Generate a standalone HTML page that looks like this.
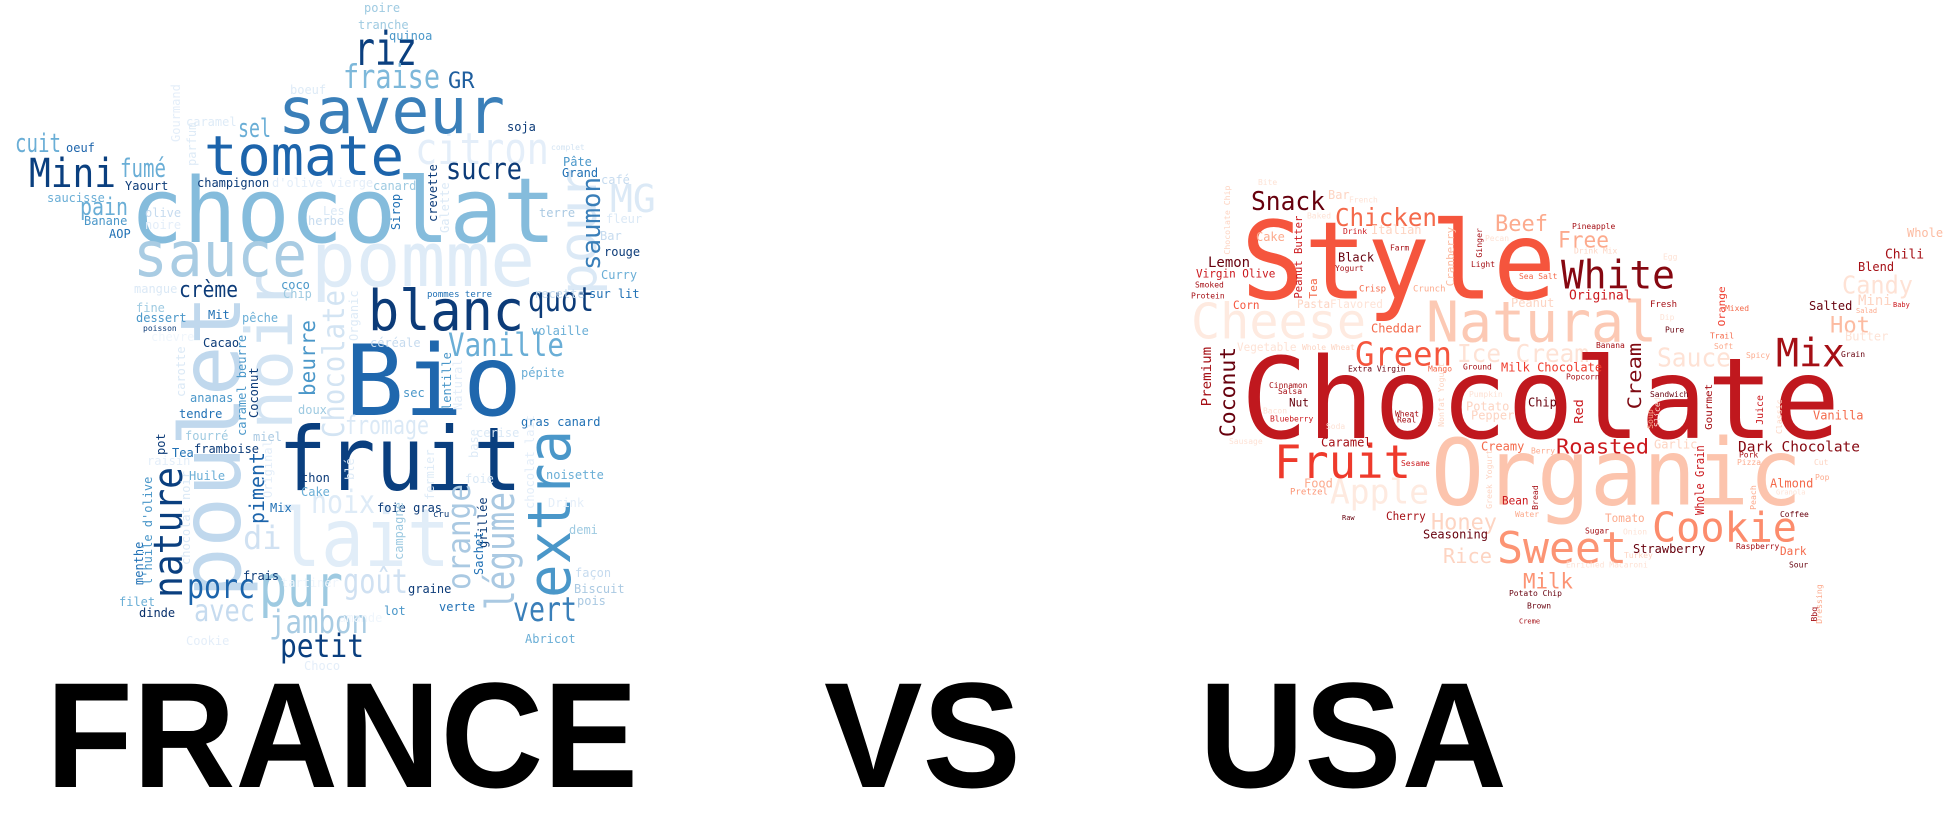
<!DOCTYPE html>
<html><head><meta charset="utf-8"><style>
html,body{margin:0;padding:0;background:#fff;width:1945px;height:828px;overflow:hidden}
svg{display:block}
text{font-family:"DejaVu Sans Mono","Liberation Mono",monospace}
.t{font-family:"Liberation Sans",sans-serif;font-weight:bold}
</style></head><body>
<svg width="1945" height="828" viewBox="0 0 1945 828" xmlns="http://www.w3.org/2000/svg">
<!-- FRANCE cloud -->
<g>
<text x="311" y="286" font-size="76" fill="#deebf7" textLength="224" lengthAdjust="spacingAndGlyphs">pomme</text>
<text x="278" y="566" font-size="80" fill="#e1edf8" textLength="172" lengthAdjust="spacingAndGlyphs">lait</text>
<text x="415" y="164" font-size="44" fill="#e4eef9" textLength="134" lengthAdjust="spacingAndGlyphs">citron</text>
<text transform="translate(240,598) rotate(-90)" font-size="84" fill="#c0d8ed" textLength="303" lengthAdjust="spacingAndGlyphs">poulet</text>
<text transform="translate(292,430) rotate(-90)" font-size="64" fill="#d3e4f3" textLength="160" lengthAdjust="spacingAndGlyphs">noir</text>
<text transform="translate(596,295) rotate(-90)" font-size="52" fill="#dbe9f6" textLength="127" lengthAdjust="spacingAndGlyphs">pour</text>
<text x="130" y="242" font-size="90" fill="#85bcdc" textLength="426" lengthAdjust="spacingAndGlyphs">chocolat</text>
<text x="278" y="133" font-size="64" fill="#3a7fb9" textLength="227" lengthAdjust="spacingAndGlyphs">saveur</text>
<text x="204" y="175" font-size="55" fill="#1c64ab" textLength="200" lengthAdjust="spacingAndGlyphs">tomate</text>
<text x="133" y="276" font-size="62" fill="#a9cce3" textLength="174" lengthAdjust="spacingAndGlyphs">sauce</text>
<text x="345" y="415" font-size="98" fill="#1f67ad" textLength="177" lengthAdjust="spacingAndGlyphs">Bio</text>
<text x="278" y="490" font-size="88" fill="#0a3f7f" textLength="244" lengthAdjust="spacingAndGlyphs">fruit</text>
<text x="368" y="330" font-size="56" fill="#0c3b78" textLength="156" lengthAdjust="spacingAndGlyphs">blanc</text>
<text transform="translate(570,598) rotate(-90)" font-size="60" fill="#4a97c9" textLength="168" lengthAdjust="spacingAndGlyphs">extra</text>
<text x="354" y="65" font-size="46" fill="#0a3f7f" textLength="63" lengthAdjust="spacingAndGlyphs">riz</text>
<text x="343" y="88" font-size="33" fill="#7db8da" textLength="97" lengthAdjust="spacingAndGlyphs">fraise</text>
<text x="448" y="88" font-size="22" fill="#205f9f">GR</text>
<text x="29" y="187" font-size="40" fill="#0a3f7f" textLength="87" lengthAdjust="spacingAndGlyphs">Mini</text>
<text x="15" y="152" font-size="26" fill="#6aaed6" textLength="46" lengthAdjust="spacingAndGlyphs">cuit</text>
<text x="66" y="152" font-size="12" fill="#1c64ab">oeuf</text>
<text x="446" y="179" font-size="29" fill="#0c3b78" textLength="76" lengthAdjust="spacingAndGlyphs">sucre</text>
<text transform="translate(600,270) rotate(-90)" font-size="26" fill="#3a7fb9" textLength="93" lengthAdjust="spacingAndGlyphs">saumon</text>
<text x="610" y="212" font-size="38" fill="#dbe9f6">MG</text>
<text x="528" y="311" font-size="34" fill="#0c3b78" textLength="66" lengthAdjust="spacingAndGlyphs">quot</text>
<text x="448" y="356" font-size="32" fill="#6aaed6" textLength="116" lengthAdjust="spacingAndGlyphs">Vanille</text>
<text x="179" y="297" font-size="22" fill="#0c3b78" textLength="59" lengthAdjust="spacingAndGlyphs">crème</text>
<text transform="translate(182,598) rotate(-90)" font-size="40" fill="#0a3f7f" textLength="131" lengthAdjust="spacingAndGlyphs">nature</text>
<text x="259" y="606" font-size="58" fill="#9ecae1" textLength="84" lengthAdjust="spacingAndGlyphs">pur</text>
<text x="187" y="598" font-size="34" fill="#1c64ab" textLength="68" lengthAdjust="spacingAndGlyphs">porc</text>
<text x="269" y="633" font-size="32" fill="#a9cce3" textLength="99" lengthAdjust="spacingAndGlyphs">jambon</text>
<text x="280" y="657" font-size="32" fill="#0a3f7f" textLength="84" lengthAdjust="spacingAndGlyphs">petit</text>
<text x="194" y="621" font-size="30" fill="#c6dbef" textLength="61" lengthAdjust="spacingAndGlyphs">avec</text>
<text x="343" y="593" font-size="34" fill="#d0e1f2" textLength="65" lengthAdjust="spacingAndGlyphs">goût</text>
<text transform="translate(514,610) rotate(-90)" font-size="40" fill="#aac9e2" textLength="118" lengthAdjust="spacingAndGlyphs">légume</text>
<text transform="translate(470,590) rotate(-90)" font-size="32" fill="#aac9e2" textLength="106" lengthAdjust="spacingAndGlyphs">orange</text>
<text x="513" y="621" font-size="34" fill="#3a7fb9" textLength="64" lengthAdjust="spacingAndGlyphs">vert</text>
<text x="311" y="513" font-size="32" fill="#deebf7" textLength="64" lengthAdjust="spacingAndGlyphs">noix</text>
<text x="243" y="549" font-size="32" fill="#d0e1f2">di</text>
<text x="345" y="434" font-size="26" fill="#dbe9f6" textLength="84" lengthAdjust="spacingAndGlyphs">fromage</text>
<text transform="translate(344,438) rotate(-90)" font-size="30" fill="#d3e4f3" textLength="148" lengthAdjust="spacingAndGlyphs">Chocolate</text>
<text transform="translate(315,396) rotate(-90)" font-size="21" fill="#4a97c9" textLength="76" lengthAdjust="spacingAndGlyphs">beurre</text>
<text transform="translate(264,524) rotate(-90)" font-size="20" fill="#1c64ab" textLength="72" lengthAdjust="spacingAndGlyphs">piment</text>
<text x="120" y="177" font-size="26" fill="#6aaed6" textLength="46" lengthAdjust="spacingAndGlyphs">fumé</text>
<text x="80" y="215" font-size="24" fill="#6aaed6" textLength="48" lengthAdjust="spacingAndGlyphs">pain</text>
<text x="238" y="137" font-size="26" fill="#6aaed6" textLength="33" lengthAdjust="spacingAndGlyphs">sel</text>
</g>
<g font-size="12">
<text x="364" y="12" fill="#9ecae1">poire</text>
<text x="358" y="29" fill="#9ecae1">tranche</text>
<text x="389" y="40" fill="#4a97c9">quinoa</text>
<text x="290" y="94" fill="#deebf7">boeuf</text>
<text x="186" y="126" fill="#deebf7">caramel</text>
<text x="507" y="131" fill="#0c3b78">soja</text>
<text x="551" y="150" font-size="8" fill="#d3e4f3">complet</text>
<text x="563" y="166" fill="#4a97c9">Pâte</text>
<text x="562" y="177" fill="#2171b5">Grand</text>
<text x="601" y="184" fill="#c6dbef">café</text>
<text x="125" y="190" fill="#0c3b78">Yaourt</text>
<text x="197" y="187" fill="#0c3b78">champignon</text>
<text x="272" y="187" fill="#e4eef9">d'olive vierge</text>
<text x="373" y="190" fill="#9ecae1">canard</text>
<text x="47" y="202" fill="#6aaed6">saucisse</text>
<text x="145" y="217" fill="#c6dbef">olive</text>
<text x="145" y="229" fill="#e4eef9">noire</text>
<text x="84" y="225" fill="#4a97c9">Banane</text>
<text x="109" y="238" fill="#2171b5">AOP</text>
<text x="323" y="215" fill="#dbe9f6">Les</text>
<text x="308" y="225" fill="#c6dbef">herbe</text>
<text x="539" y="217" fill="#aac9e2">terre</text>
<text x="606" y="223" fill="#dbe9f6">fleur</text>
<text x="600" y="240" fill="#c6dbef">Bar</text>
<text x="604" y="256" fill="#0c3b78">rouge</text>
<text x="601" y="279" fill="#6aaed6">Curry</text>
<text x="589" y="298" fill="#2171b5">sur lit</text>
<text x="534" y="298" fill="#c6dbef">recette</text>
<text x="427" y="297" font-size="9" fill="#2171b5">pommes terre</text>
<text x="281" y="289" fill="#4a97c9">coco</text>
<text x="283" y="298" fill="#9ecae1">Chip</text>
<text x="134" y="293" fill="#dbe9f6">mangue</text>
<text x="136" y="312" fill="#9ecae1">fine</text>
<text x="136" y="322" fill="#4a97c9">dessert</text>
<text x="143" y="331" font-size="8" fill="#0c3b78">poisson</text>
<text x="151" y="341" fill="#f0f6fc">chèvre</text>
<text x="208" y="319" fill="#2171b5">Mit</text>
<text x="242" y="322" fill="#6aaed6">pêche</text>
<text x="203" y="347" fill="#0c3b78">Cacao</text>
<text x="531" y="335" fill="#6aaed6">volaille</text>
<text x="370" y="347" fill="#c6dbef">céréale</text>
<text x="521" y="377" fill="#6aaed6">pépite</text>
<text x="403" y="397" fill="#4a97c9">sec</text>
<text x="190" y="402" fill="#4a97c9">ananas</text>
<text x="179" y="418" fill="#2171b5">tendre</text>
<text x="298" y="414" fill="#9ecae1">doux</text>
<text x="521" y="426" fill="#2171b5">gras canard</text>
<text x="185" y="440" fill="#9ecae1">fourré</text>
<text x="253" y="441" fill="#aac9e2">miel</text>
<text x="476" y="437" fill="#dbe9f6">cerise</text>
<text x="194" y="453" fill="#0c3b78">framboise</text>
<text x="172" y="457" fill="#2171b5">Tea</text>
<text x="147" y="465" fill="#e4eef9">raisin</text>
<text x="189" y="480" fill="#6aaed6">Huile</text>
<text x="301" y="482" fill="#0c3b78">thon</text>
<text x="301" y="496" fill="#6aaed6">Cake</text>
<text x="546" y="479" fill="#6aaed6">noisette</text>
<text x="465" y="483" fill="#dbe9f6">foie</text>
<text x="548" y="507" fill="#e4eef9">Drink</text>
<text x="270" y="512" fill="#2171b5">Mix</text>
<text x="377" y="512" fill="#0c3b78">foie gras</text>
<text x="433" y="517" font-size="9" fill="#0c3b78">cru</text>
<text x="569" y="534" fill="#9ecae1">demi</text>
<text x="243" y="580" fill="#0c3b78">frais</text>
<text x="575" y="577" fill="#c6dbef">façon</text>
<text x="408" y="593" fill="#0c3b78">graine</text>
<text x="574" y="593" fill="#aac9e2">Biscuit</text>
<text x="577" y="605" fill="#aac9e2">pois</text>
<text x="119" y="606" fill="#6aaed6">filet</text>
<text x="139" y="617" fill="#08306b">dinde</text>
<text x="384" y="615" fill="#4a97c9">lot</text>
<text x="439" y="611" fill="#2171b5">verte</text>
<text x="525" y="643" fill="#6aaed6">Abricot</text>
<text x="186" y="645" fill="#e4eef9">Cookie</text>
<text x="339" y="622" fill="#f0f6fc">amande</text>
<text x="281" y="587" fill="#f0f6fc">tartiner</text>
<text x="304" y="670" fill="#e4eef9">Choco</text>
<text transform="translate(246,436) rotate(-90)" fill="#4a97c9">caramel beurre</text>
<text transform="translate(258,418) rotate(-90)" fill="#0c3b78">Coconut</text>
<text transform="translate(400,230) rotate(-90)" fill="#2171b5">Sirop</text>
<text transform="translate(437,222) rotate(-90)" fill="#0c3b78">crevette</text>
<text transform="translate(449,233) rotate(-90)" fill="#dbe9f6">Galette</text>
<text transform="translate(180,142) rotate(-90)" fill="#e4eef9">Gourmand</text>
<text transform="translate(196,166) rotate(-90)" fill="#deebf7">parfum</text>
<text transform="translate(185,397) rotate(-90)" fill="#dbe9f6">carotte</text>
<text transform="translate(358,341) rotate(-90)" fill="#deebf7">Organic</text>
<text transform="translate(451,410) rotate(-90)" fill="#4a97c9">lentille</text>
<text transform="translate(462,410) rotate(-90)" fill="#e4eef9">Natural</text>
<text transform="translate(190,565) rotate(-90)" fill="#dbe9f6">chocolat noir</text>
<text transform="translate(152,585) rotate(-90)" fill="#4a97c9">l'huile d'olive</text>
<text transform="translate(143,585) rotate(-90)" fill="#2171b5">menthe</text>
<text transform="translate(165,455) rotate(-90)" fill="#0c3b78">pot</text>
<text transform="translate(403,560) rotate(-90)" fill="#9ecae1">campagne</text>
<text transform="translate(487,548) rotate(-90)" fill="#0c3b78">grillée</text>
<text transform="translate(483,575) rotate(-90)" fill="#2171b5">Sachet</text>
<text transform="translate(534,509) rotate(-90)" fill="#e4eef9">chocolat lait</text>
<text transform="translate(478,458) rotate(-90)" fill="#deebf7">base</text>
<text transform="translate(434,500) rotate(-90)" fill="#deebf7">fermier</text>
<text transform="translate(354,480) rotate(-90)" fill="#deebf7">blé</text>
<text transform="translate(272,498) rotate(-90)" fill="#e4eef9">Original</text>
</g>

<!-- USA cloud -->
<g transform="translate(0,150) scale(1,1.0253)">
<text x="1431" y="346" font-size="90" fill="#fcc4ad" textLength="371" lengthAdjust="spacingAndGlyphs">Organic</text>
<text x="1426" y="187" font-size="55" fill="#fcc9b4" textLength="231" lengthAdjust="spacingAndGlyphs">Natural</text>
<text x="1191" y="184" font-size="48" fill="#feeae0" textLength="175" lengthAdjust="spacingAndGlyphs">Cheese</text>
<text x="1330" y="345" font-size="33" fill="#feeae0" textLength="99" lengthAdjust="spacingAndGlyphs">Apple</text>
<text x="1457" y="207" font-size="24" fill="#fee2d5" textLength="132" lengthAdjust="spacingAndGlyphs">Ice Cream</text>
<text x="1657" y="211" font-size="25" fill="#fee2d5" textLength="74" lengthAdjust="spacingAndGlyphs">Sauce</text>
<text x="1842" y="140" font-size="24" fill="#fee2d5" textLength="71" lengthAdjust="spacingAndGlyphs">Candy</text>
<text x="1241" y="281" font-size="110" fill="#c0181e" textLength="599" lengthAdjust="spacingAndGlyphs">Chocolate</text>
<text x="1241" y="145" font-size="105" fill="#f5553d" textLength="315" lengthAdjust="spacingAndGlyphs">Style</text>
<text x="1561" y="135" font-size="38" fill="#860811" textLength="114" lengthAdjust="spacingAndGlyphs">White</text>
<text x="1251" y="58.5" font-size="25" fill="#67000d" textLength="74" lengthAdjust="spacingAndGlyphs">Snack</text>
<text x="1335" y="74" font-size="24" fill="#f4694a" textLength="102" lengthAdjust="spacingAndGlyphs">Chicken</text>
<text x="1495" y="79" font-size="22" fill="#fcaa8d" textLength="53" lengthAdjust="spacingAndGlyphs">Beef</text>
<text x="1558" y="95" font-size="22" fill="#fcaa8d" textLength="51" lengthAdjust="spacingAndGlyphs">Free</text>
<text x="1776" y="211" font-size="38" fill="#a50f15" textLength="69" lengthAdjust="spacingAndGlyphs">Mix</text>
<text x="1274" y="320" font-size="45" fill="#ee3a2c" textLength="137" lengthAdjust="spacingAndGlyphs">Fruit</text>
<text x="1497" y="403" font-size="43" fill="#fc9474" textLength="130" lengthAdjust="spacingAndGlyphs">Sweet</text>
<text x="1652" y="382" font-size="40" fill="#fc8c6c" textLength="145" lengthAdjust="spacingAndGlyphs">Cookie</text>
<text x="1355" y="210" font-size="32" fill="#f5553d" textLength="97" lengthAdjust="spacingAndGlyphs">Green</text>
<text x="1556" y="296" font-size="20" fill="#cb181d" textLength="93" lengthAdjust="spacingAndGlyphs">Roasted</text>
<text x="1830" y="178" font-size="22" fill="#fcbba1" textLength="40" lengthAdjust="spacingAndGlyphs">Hot</text>
<text x="1523" y="427.5" font-size="21" fill="#fc9474" textLength="50" lengthAdjust="spacingAndGlyphs">Milk</text>
<text x="1431" y="370" font-size="22" fill="#fdd4c2" textLength="66" lengthAdjust="spacingAndGlyphs">Honey</text>
<text x="1443" y="403" font-size="20" fill="#fdd4c2" textLength="49" lengthAdjust="spacingAndGlyphs">Rice</text>
<text x="1738" y="294" font-size="14" fill="#860811" textLength="122" lengthAdjust="spacingAndGlyphs">Dark Chocolate</text>
<text transform="translate(1235,280) rotate(-90)" font-size="21" fill="#67000d" textLength="88" lengthAdjust="spacingAndGlyphs">Coconut</text>
<text transform="translate(1211,250) rotate(-90)" font-size="13" fill="#a50f15" textLength="58" lengthAdjust="spacingAndGlyphs">Premium</text>
<text transform="translate(1641,253) rotate(-90)" font-size="19" fill="#7f0a12" textLength="65" lengthAdjust="spacingAndGlyphs">Cream</text>
<text transform="translate(1302,145) rotate(-90)" font-size="11" fill="#cb181d" textLength="81" lengthAdjust="spacingAndGlyphs">Peanut Butter</text>
<text transform="translate(1317,145) rotate(-90)" font-size="11" fill="#f4694a">Tea</text>
<text transform="translate(1454,133) rotate(-90)" font-size="11" fill="#fcbba1" textLength="58" lengthAdjust="spacingAndGlyphs">Cranberry</text>
<text transform="translate(1704,356) rotate(-90)" font-size="12" fill="#cb181d" textLength="68" lengthAdjust="spacingAndGlyphs">Whole Grain</text>
<text transform="translate(1712,273) rotate(-90)" font-size="10" fill="#a50f15" textLength="45" lengthAdjust="spacingAndGlyphs">Gourmet</text>
<text transform="translate(1583,267) rotate(-90)" font-size="12" fill="#cb181d" textLength="24" lengthAdjust="spacingAndGlyphs">Red</text>
<text transform="translate(1763,268) rotate(-90)" font-size="10" fill="#cb181d" textLength="29" lengthAdjust="spacingAndGlyphs">Juice</text>
<text transform="translate(1725,172) rotate(-90)" font-size="10" fill="#ef3b2c" textLength="39" lengthAdjust="spacingAndGlyphs">Orange</text>
<text transform="translate(1482,105) rotate(-90)" font-size="8" fill="#a50f15">Ginger</text>
<text transform="translate(1230,102) rotate(-90)" font-size="8" fill="#fdd4c2">Chocolate Chip</text>
<text transform="translate(1444,270) rotate(-90)" font-size="8" fill="#fdd4c2">Nonfat Yogurt</text>
<text transform="translate(1492,350) rotate(-90)" font-size="8" fill="#fdd4c2">Greek Yogurt</text>
<text transform="translate(1660,270) rotate(-90)" font-size="8" fill="#fee2d5">Sliced</text>
<text transform="translate(1653,272) rotate(-90)" font-size="8" fill="#fcaa8d">Soup</text>
<text transform="translate(1782,277) rotate(-90)" font-size="8" fill="#fdd4c2">Classic</text>
<text transform="translate(1756,351) rotate(-90)" font-size="8" fill="#fcaa8d">Peach</text>
<text transform="translate(1538,351) rotate(-90)" font-size="8" fill="#a50f15">Bread</text>
<text transform="translate(1817,460) rotate(-90)" font-size="8" fill="#a50f15">Bbq</text>
<text transform="translate(1822,462) rotate(-90)" font-size="8" fill="#fcaa8d">Dressing</text>
<g font-size="11">
<text x="1208" y="114" font-size="14" fill="#67000d">Lemon</text>
<text x="1196" y="124.5" fill="#cb181d">Virgin Olive</text>
<text x="1195" y="134" font-size="8" fill="#a50f15">Smoked</text>
<text x="1191" y="145" font-size="8" fill="#a50f15">Protein</text>
<text x="1233" y="155" fill="#f5553d">Corn</text>
<text x="1256" y="89" font-size="12" fill="#fcaa8d">Cake</text>
<text x="1338" y="109" font-size="12" fill="#67000d">Black</text>
<text x="1335" y="118" font-size="8" fill="#a50f15">Yogurt</text>
<text x="1343" y="82" font-size="8" fill="#cb181d">Drink</text>
<text x="1371" y="82" font-size="12" fill="#fdd4c2">Italian</text>
<text x="1390" y="98" font-size="8" fill="#a50f15">Farm</text>
<text x="1359" y="138" font-size="9" fill="#f4694a">Crisp</text>
<text x="1413" y="138" font-size="9" fill="#fcaa8d">Crunch</text>
<text x="1297" y="154" fill="#fdd4c2">Pasta</text>
<text x="1330" y="154" fill="#fee2d5">Flavored</text>
<text x="1371" y="178" font-size="12" fill="#f4694a">Cheddar</text>
<text x="1328" y="48" font-size="12" fill="#fdd4c2">Bar</text>
<text x="1349" y="51" font-size="8" fill="#fee2d5">French</text>
<text x="1572" y="77" font-size="8" fill="#a50f15">Pineapple</text>
<text x="1485" y="89" font-size="8" fill="#fee2d5">Pecan</text>
<text x="1471" y="114" font-size="8" fill="#a50f15">Light</text>
<text x="1519" y="126" font-size="8" fill="#f4694a">Sea Salt</text>
<text x="1574" y="101" font-size="8" fill="#fdd4c2">Drink Mix</text>
<text x="1569" y="146" font-size="13" fill="#cb181d">Original</text>
<text x="1511" y="153" font-size="12" fill="#fdd4c2">Peanut</text>
<text x="1650" y="153" font-size="9" fill="#a50f15">Fresh</text>
<text x="1665" y="178" font-size="8" fill="#67000d">Pure</text>
<text x="1660" y="166" font-size="8" fill="#fee2d5">Dip</text>
<text x="1596" y="193" font-size="8" fill="#a50f15">Banana</text>
<text x="1663" y="107" font-size="8" fill="#fee2d5">Egg</text>
<text x="1907" y="85" font-size="12" fill="#fcbba1">Whole</text>
<text x="1885" y="106" font-size="13" fill="#a50f15">Chili</text>
<text x="1858" y="118" font-size="12" fill="#a50f15">Blend</text>
<text x="1809" y="156" font-size="12" fill="#67000d">Salted</text>
<text x="1858" y="151" font-size="14" fill="#fdd4c2">Mini</text>
<text x="1893" y="153" font-size="7" fill="#cb181d">Baby</text>
<text x="1856" y="159" font-size="7" fill="#fcaa8d">Salad</text>
<text x="1725" y="157" font-size="8" fill="#f4694a">Mixed</text>
<text x="1710" y="184" font-size="8" fill="#f4694a">Trail</text>
<text x="1714" y="194" font-size="8" fill="#fcaa8d">Soft</text>
<text x="1746" y="203" font-size="8" fill="#fcaa8d">Spicy</text>
<text x="1841" y="202" font-size="8" fill="#67000d">Grain</text>
<text x="1845" y="186" font-size="12" fill="#fee2d5">Butter</text>
<text x="1237" y="196" font-size="11" fill="#fee2d5">Vegetable</text>
<text x="1302" y="195" font-size="8" fill="#fdd4c2">Whole Wheat</text>
<text x="1348" y="216" font-size="8" fill="#67000d">Extra Virgin</text>
<text x="1428" y="216" font-size="8" fill="#f4694a">Mango</text>
<text x="1463" y="214" font-size="8" fill="#a50f15">Ground</text>
<text x="1501" y="216" font-size="12" fill="#ef3b2c">Milk Chocolate</text>
<text x="1566" y="224" font-size="8" fill="#a50f15">Popcorn</text>
<text x="1269" y="232" font-size="8" fill="#a50f15">Cinnamon</text>
<text x="1278" y="238" font-size="8" fill="#a50f15">Salsa</text>
<text x="1289" y="250" fill="#67000d">Nut</text>
<text x="1270" y="265" font-size="8" fill="#cb181d">Blueberry</text>
<text x="1263" y="257" font-size="8" fill="#fee2d5">Bacon</text>
<text x="1326" y="272" font-size="8" fill="#fee2d5">Soda</text>
<text x="1229" y="287" font-size="8" fill="#fee2d5">Sausage</text>
<text x="1650" y="241" font-size="8" fill="#67000d">Sandwich</text>
<text x="1528" y="250" font-size="12" fill="#67000d">Chip</text>
<text x="1466" y="254" font-size="12" fill="#fdd4c2">Potato</text>
<text x="1471" y="263" font-size="12" fill="#fdd4c2">Pepper</text>
<text x="1469" y="241" font-size="8" fill="#fee2d5">Pumpkin</text>
<text x="1395" y="260" font-size="8" fill="#a50f15">Wheat</text>
<text x="1397" y="266" font-size="8" fill="#a50f15">Real</text>
<text x="1813" y="263" font-size="12" fill="#f4694a">Vanilla</text>
<text x="1321" y="289" font-size="12" fill="#a50f15">Caramel</text>
<text x="1481" y="293" font-size="12" fill="#f4694a">Creamy</text>
<text x="1531" y="296" font-size="8" fill="#fcaa8d">Berry</text>
<text x="1654" y="291" font-size="12" fill="#fdd4c2">Garlic</text>
<text x="1739" y="300" font-size="8" fill="#a50f15">Pork</text>
<text x="1737" y="307" font-size="8" fill="#fcaa8d">Pizza</text>
<text x="1814" y="307" font-size="8" fill="#fdd4c2">Cut</text>
<text x="1815" y="322" font-size="8" fill="#fcaa8d">Pop</text>
<text x="1401" y="308" font-size="8" fill="#cb181d">Sesame</text>
<text x="1304" y="329" font-size="12" fill="#fcaa8d">Food</text>
<text x="1290" y="336" font-size="9" fill="#fc9474">Pretzel</text>
<text x="1770" y="329" font-size="12" fill="#f4694a">Almond</text>
<text x="1776" y="336" font-size="7" fill="#fee2d5">Granola</text>
<text x="1502" y="346" fill="#cb181d">Bean</text>
<text x="1515" y="358" font-size="8" fill="#fcaa8d">Water</text>
<text x="1780" y="358" font-size="8" fill="#67000d">Coffee</text>
<text x="1386" y="361" fill="#a50f15">Cherry</text>
<text x="1342" y="361" font-size="7" fill="#67000d">Raw</text>
<text x="1605" y="363" fill="#fcaa8d">Tomato</text>
<text x="1585" y="374" font-size="8" fill="#a50f15">Sugar</text>
<text x="1623" y="375" font-size="8" fill="#fee2d5">Onion</text>
<text x="1423" y="379" font-size="12" fill="#67000d">Seasoning</text>
<text x="1633" y="393" font-size="12" fill="#67000d">Strawberry</text>
<text x="1736" y="389" font-size="8" fill="#a50f15">Raspberry</text>
<text x="1780" y="395" fill="#f4694a">Dark</text>
<text x="1624" y="398" font-size="8" fill="#fdd4c2">Turkey</text>
<text x="1566" y="407" font-size="8" fill="#fee2d5">Enriched Macaroni</text>
<text x="1789" y="407" font-size="8" fill="#67000d">Sour</text>
<text x="1509" y="435" font-size="8" fill="#67000d">Potato Chip</text>
<text x="1527" y="447" font-size="8" fill="#67000d">Brown</text>
<text x="1519" y="462" font-size="7" fill="#a50f15">Creme</text>
<text x="1258" y="34" font-size="8" fill="#fee2d5">Bite</text>
<text x="1307" y="67" font-size="8" fill="#fee2d5">Baked</text>
</g>
</g>

<!-- Titles -->
<text class="t" x="46" y="787" font-size="150" fill="#000" textLength="592" lengthAdjust="spacingAndGlyphs">FRANCE</text>
<text class="t" x="824" y="787" font-size="150" fill="#000" textLength="197" lengthAdjust="spacingAndGlyphs">VS</text>
<text class="t" x="1199" y="787" font-size="150" fill="#000" textLength="308" lengthAdjust="spacingAndGlyphs">USA</text>
</svg>
</body></html>
